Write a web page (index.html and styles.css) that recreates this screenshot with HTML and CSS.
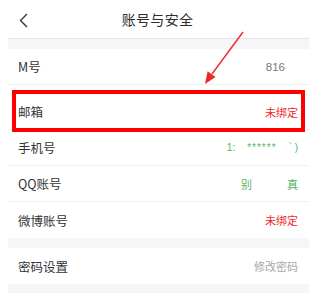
FILE: index.html
```html
<!DOCTYPE html>
<html lang="zh-CN">
<head>
    <meta charset="UTF-8">
    <meta name="viewport" content="width=device-width, initial-scale=1.0">
    <title>账号与安全</title>
    <link rel="stylesheet" href="styles.css">
</head>
<body>
    <div class="page">
        <!-- Top bar -->
        <div class="topbar">
            <span class="back">
                <svg width="9" height="15" viewBox="0 0 9 15"><path d="M8 1 L1.5 7.5 L8 14" fill="none" stroke="#333" stroke-width="1.4"/></svg>
            </span>
            <span class="title">账号与安全</span>
        </div>

        <div class="list">
            <div class="gap"></div>
            <div class="row">
                <span class="label">M号</span>
                <span class="value muted num">816</span>
            </div>
            <div class="row row-mail">
                <span class="label">邮箱</span>
                <span class="value red">未绑定</span>
            </div>
            <div class="row">
                <span class="label">手机号</span>
                <span class="value green phone"><span>1:</span><span class="stars">******</span><span>&#96;&nbsp;)</span></span>
            </div>
            <div class="row">
                <span class="label">QQ账号</span>
                <span class="value green qq"><span>别</span><span>真</span></span>
            </div>
            <div class="row last">
                <span class="label">微博账号</span>
                <span class="value red">未绑定</span>
            </div>
            <div class="gap"></div>
            <div class="row last">
                <span class="label">密码设置</span>
                <span class="value light">修改密码</span>
            </div>
            <div class="gap bottom"></div>
        </div>

        <!-- annotation -->
        <div class="highlight"></div>
        <svg class="pointer" width="60" height="65" viewBox="190 25 60 65">
            <line x1="243" y1="32" x2="212" y2="74" stroke="#f0282d" stroke-width="1.4"/>
            <polygon points="205,84 207.6,71.2 215.6,77" fill="#f0282d"/>
        </svg>
    </div>
</body>
</html>
```

FILE: styles.css
```css
body {
    margin: 0;
    background: #ffffff;
    font-family: "Noto Sans CJK SC", "Noto Sans", sans-serif;
    color: #333333;
}

.page {
    position: relative;
    width: 321px;
    height: 293px;
    overflow: hidden;
}

.topbar {
    height: 38px;
    display: flex;
    align-items: center;
    justify-content: center;
    position: relative;
    border-bottom: 1px solid #e6e6e6;
    margin: 0 12px 0 8px;
}

.back {
    position: absolute;
    left: 11px;
    top: 13px;
    display: flex;
}

.title {
    font-size: 14px;
    color: #2e2e2e;
    letter-spacing: 0.3px;
    margin-left: -2px;
}

.list {
    margin: 0 12px 0 8px;
}

.gap {
    height: 10px;
    background: #f6f6f6;
}

.gap.bottom {
    height: 20px;
}

.row {
    height: 36px;
    display: flex;
    align-items: center;
    justify-content: space-between;
    padding: 0 11px 0 10px;
    border-bottom: 1px solid #f0f0f0;
    box-sizing: border-box;
}

.row.last {
    border-bottom: none;
}

.row-mail {
    height: 45px;
    padding-top: 9px;
}

.label {
    font-size: 12.5px;
    color: #333333;
}

.value {
    font-size: 11px;
}

.muted {
    color: #777777;
}

.num {
    font-family: "Liberation Sans", sans-serif;
    font-size: 11.5px;
    margin-right: 13px;
}

.light {
    color: #a8a8a8;
}

.red {
    color: #f0282d;
}

.green {
    color: #56b35e;
}

.phone {
    display: flex;
    gap: 12px;
    font-family: "Liberation Sans", sans-serif;
    font-size: 10px;
}

.phone .stars {
    letter-spacing: 1px;
}

.qq {
    display: flex;
    gap: 35px;
}

.highlight {
    position: absolute;
    left: 12px;
    top: 90px;
    width: 293px;
    height: 42px;
    border: 4px solid #ff0000;
    box-sizing: border-box;
}

.pointer {
    position: absolute;
    left: 190px;
    top: 25px;
}
```
